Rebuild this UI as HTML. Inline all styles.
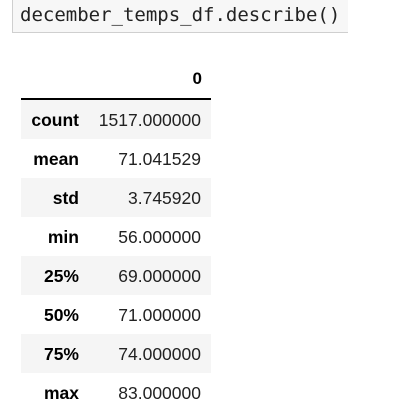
<!DOCTYPE html><html><head><style>
body{margin:0;width:400px;height:413px;background:#fff;position:relative;overflow:hidden;font-family:"Liberation Sans",Arial,sans-serif;}
.code{position:absolute;left:12px;top:-2px;width:335px;height:34px;background:#f7f7f7;border-left:1px solid #cfcfcf;border-bottom:1px solid #cfcfcf;}
.code span{position:absolute;left:7px;top:6px;font-family:"DejaVu Sans Mono","Liberation Mono",monospace;font-size:19px;color:#222;}
.hdr{position:absolute;left:21px;top:69px;width:181px;text-align:right;font-weight:bold;font-size:17px;color:#000;}
.rule{position:absolute;left:21px;top:98px;width:190px;height:2px;background:#000;}
.row{position:absolute;left:21px;width:190px;height:39px;font-size:17.5px;color:#000;}
.row.g{background:#f5f5f5;}
.row b{position:absolute;right:132px;top:10px;}
.row i{position:absolute;right:10px;top:10px;font-style:normal;color:#222;}
</style></head><body>
<div class="code"><span>december_temps_df.describe()</span></div>
<div class="hdr">0</div>
<div class="rule"></div>
<div class="row g" style="top:100px"><b>count</b><i>1517.000000</i></div>
<div class="row" style="top:139px"><b>mean</b><i>71.041529</i></div>
<div class="row g" style="top:178px"><b>std</b><i>3.745920</i></div>
<div class="row" style="top:217px"><b>min</b><i>56.000000</i></div>
<div class="row g" style="top:256px"><b>25%</b><i>69.000000</i></div>
<div class="row" style="top:295px"><b>50%</b><i>71.000000</i></div>
<div class="row g" style="top:334px"><b>75%</b><i>74.000000</i></div>
<div class="row" style="top:373px"><b>max</b><i>83.000000</i></div>
</body></html>
